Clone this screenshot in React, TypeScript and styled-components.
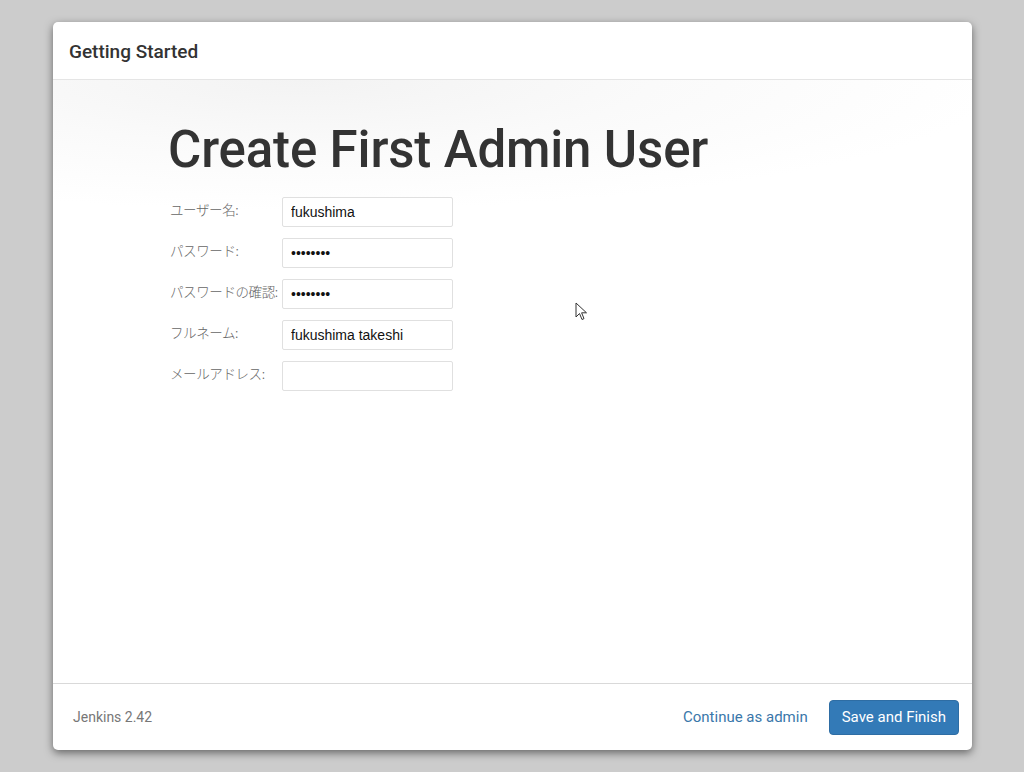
import React from "react";
import styled, { createGlobalStyle } from "styled-components";

const Global = createGlobalStyle`
  html, body { margin: 0; padding: 0; }
  body { background: #cccccc; font-family: Roboto, "Noto Sans CJK JP", sans-serif; }
`;

const Page = styled.div`
  width: 1024px;
  height: 772px;
  box-sizing: border-box;
  padding: 22px 52px 22px 53px;
  display: flex;
`;

const Modal = styled.div`
  flex: 1;
  background: #fff;
  border-radius: 5px;
  box-shadow: 0 3px 9px rgba(0, 0, 0, 0.5);
  display: flex;
  flex-direction: column;
  overflow: hidden;
  position: relative;
`;

const Header = styled.div`
  height: 58px;
  border-bottom: 1px solid #e5e5e5;
  display: flex;
  align-items: center;
  padding: 2px 0 0 16px;
  box-sizing: border-box;
  font-size: 19px;
  font-weight: 500;
  color: #333;
`;

const Body = styled.div`
  flex: 1;
  padding: 40px 0 0 115px;
  background: radial-gradient(ellipse 700px 130px at 250px 0px, #f3f3f3 0%, #fafafa 50%, #ffffff 100%);
`;

const Title = styled.h1`
  margin: 0 0 17px 0;
  font-family: Roboto, sans-serif;
  font-weight: 500;
  font-size: 51px;
  line-height: 60px;
  color: #333;
  letter-spacing: -0.15px;
`;

const Form = styled.div`
  display: grid;
  grid-template-columns: 112px 171px;
  row-gap: 11px;
  padding-left: 2px;
`;

const Label = styled.label`
  font-family: "Noto Sans CJK JP", sans-serif;
  font-size: 13.5px;
  font-weight: 300;
  color: #666;
  line-height: 24px;
  letter-spacing: -0.4px;
  white-space: nowrap;
`;

const Input = styled.input`
  box-sizing: border-box;
  height: 30px;
  width: 171px;
  border: 1px solid #e0e0e0;
  border-radius: 2px;
  padding: 0 8px;
  font-family: "Liberation Sans", Arial, sans-serif;
  font-size: 14px;
  color: #111;
  background: #fff;
  outline: none;
`;

const Footer = styled.div`
  height: 66px;
  border-top: 1px solid #d9d9d9;
  display: flex;
  align-items: center;
  padding: 0 13px 0 20px;
`;

const Version = styled.span`
  font-size: 14px;
  color: #777;
  flex: 1;
`;

const LinkButton = styled.a`
  font-size: 15px;
  color: #3a77aa;
  margin-right: 21px;
  cursor: pointer;
`;

const Primary = styled.button`
  background: #337ab7;
  border: 1px solid #2e6da4;
  color: #fff;
  font-family: Roboto, sans-serif;
  font-size: 15px;
  border-radius: 4px;
  height: 35px;
  padding: 0 12px;
`;

const Cursor = styled.svg`
  position: absolute;
  left: 522px;
  top: 280px;
`;

const fields = [
  { label: "ユーザー名:", value: "fukushima", type: "text" },
  { label: "パスワード:", value: "fukushim", type: "password" },
  { label: "パスワードの確認:", value: "fukushim", type: "password" },
  { label: "フルネーム:", value: "fukushima takeshi", type: "text" },
  { label: "メールアドレス:", value: "", type: "text" },
];

export default function App() {
  return (
    <>
      <Global />
      <Page>
        <Modal>
          <Header>Getting Started</Header>
          <Body>
            <Title>Create First Admin User</Title>
            <Form>
              {fields.map((f) => (
                <React.Fragment key={f.label}>
                  <Label>{f.label}</Label>
                  <Input type={f.type} defaultValue={f.value} readOnly />
                </React.Fragment>
              ))}
            </Form>
          </Body>
          <Footer>
            <Version>Jenkins 2.42</Version>
            <LinkButton>Continue as admin</LinkButton>
            <Primary>Save and Finish</Primary>
          </Footer>
          <Cursor width="14" height="20" viewBox="0 0 14 20">
            <path d="M1 1 L1 15 L4.5 11.5 L7 17.5 L9 16.6 L6.6 10.8 L11.5 10.8 Z" fill="#fff" stroke="#333" strokeWidth="1" strokeLinejoin="round" />
          </Cursor>
        </Modal>
      </Page>
    </>
  );
}
